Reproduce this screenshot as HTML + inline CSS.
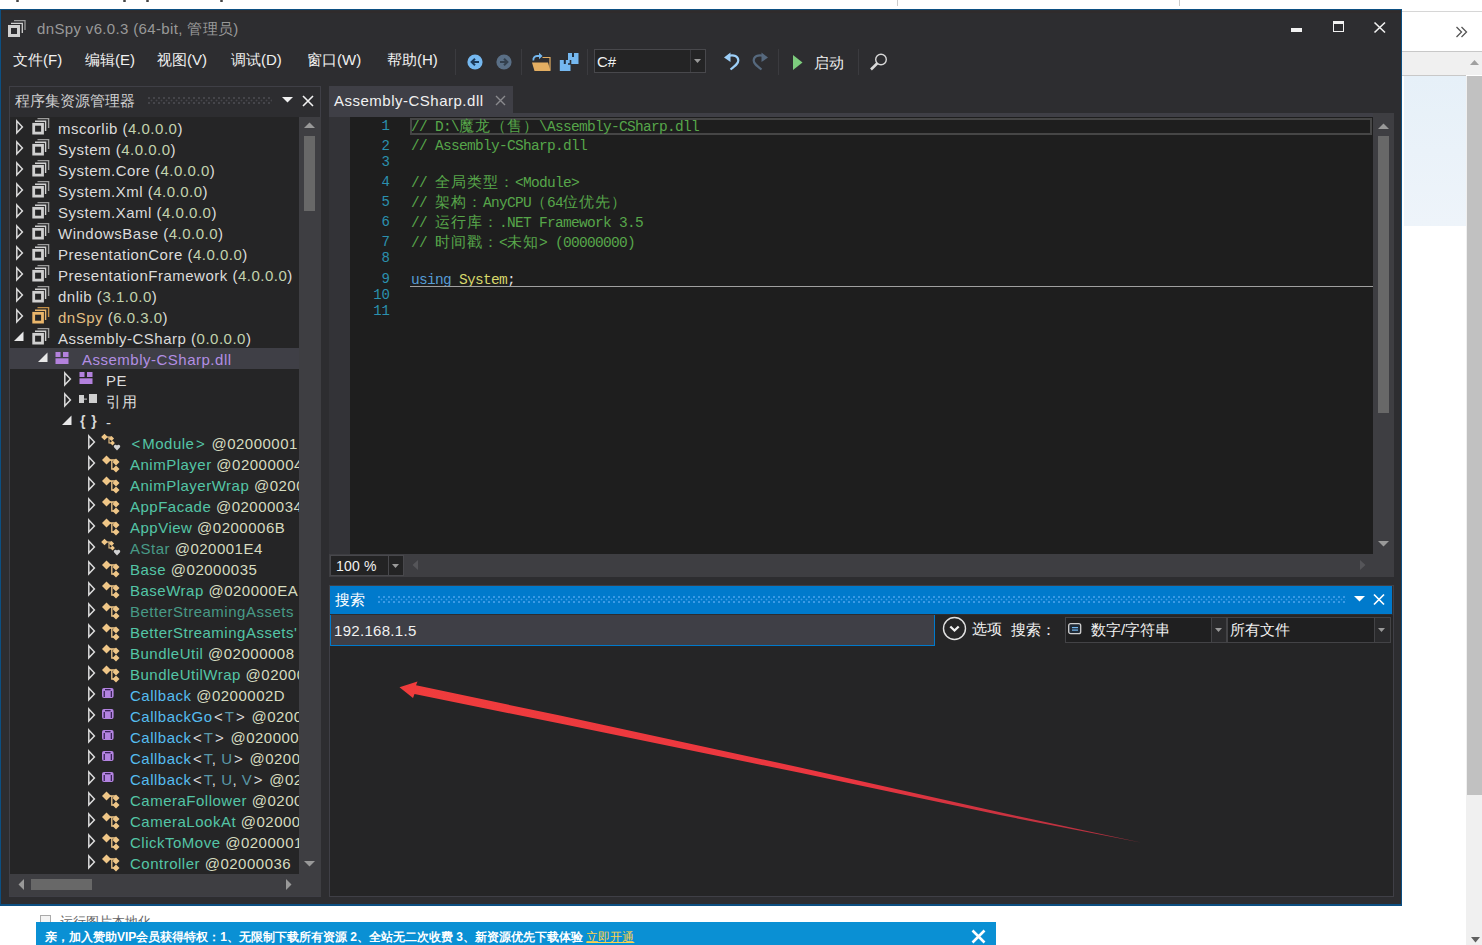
<!DOCTYPE html><html><head><meta charset="utf-8"><style>
*{box-sizing:border-box}
html,body{margin:0;padding:0}
body{width:1482px;height:945px;position:relative;overflow:hidden;background:#fff;font-family:"Liberation Sans",sans-serif}
.a{position:absolute}
.t{position:absolute;white-space:nowrap;line-height:1}
svg{position:absolute;overflow:visible}
</style></head><body>
<div class="a" style="left:1402px;top:11px;width:80px;height:1px;background:#d6d6d6"></div>
<div class="a" style="left:1402px;top:51px;width:80px;height:1px;background:#c8c8c8"></div>
<div class="a" style="left:1402px;top:52px;width:80px;height:23px;background:#f0f0f0"></div>
<div class="a" style="left:1402px;top:75px;width:64px;height:1px;background:#c8c8c8"></div>
<div class="a" style="left:1404px;top:76px;width:62px;height:150px;background:linear-gradient(#e6f0f8,#eef4fa)"></div>
<div class="a" style="left:1466px;top:76px;width:16px;height:869px;background:#f0f0f0"></div>
<div class="a" style="left:1467px;top:76px;width:15px;height:719px;background:#c1c1c1"></div>
<svg style="left:1470px;top:59px" width="10" height="7"><path d="M0 6 L4.5 1 L9 6Z" fill="#a0a0a0"/></svg>
<svg style="left:1471px;top:937px" width="10" height="7"><path d="M0 0 L4.5 5.5 L9 0Z" fill="#606060"/></svg>
<svg style="left:1455px;top:26px" width="14" height="12"><path d="M1.5 1 L6.5 6 L1.5 11 M6.5 1 L11.5 6 L6.5 11" fill="none" stroke="#555" stroke-width="1.3"/></svg>
<div class="a" style="left:16px;top:0;width:3px;height:2px;background:#444;border-radius:1px"></div>
<div class="a" style="left:123px;top:0;width:3px;height:2px;background:#444;border-radius:1px"></div>
<div class="a" style="left:146px;top:0;width:3px;height:2px;background:#444;border-radius:1px"></div>
<div class="a" style="left:220px;top:0;width:3px;height:2px;background:#444;border-radius:1px"></div>
<div class="a" style="left:897px;top:0;width:1px;height:6px;background:#ccc"></div>
<div class="a" style="left:1179px;top:0;width:1px;height:6px;background:#ccc"></div>
<div class="a" style="left:0;top:9px;width:1402px;height:897px;background:#2d2d30;border:1px solid #0c4f82;border-bottom-width:2px"></div>
<div class="a" style="left:1px;top:11px;width:1400px;height:2px;background:#2f2b2c"></div>
<svg style="left:8px;top:19px" width="19" height="19" viewBox="0 0 19 19">
<path d="M6 1.6 H17 V11" fill="none" stroke="#9a9a9a" stroke-width="1.3"/>
<path d="M3 4.3 H14.3 V14" fill="none" stroke="#d0d0d0" stroke-width="1.3"/>
<rect x="1.5" y="7.5" width="9" height="9" fill="none" stroke="#d0d0d0" stroke-width="3"/>
</svg>
<div class="t" style="left:37px;top:21px;font-size:15px;color:#999;letter-spacing:0.35px">dnSpy v6.0.3 (64-bit, 管理员)</div>
<div class="a" style="left:1291px;top:28px;width:11px;height:4px;background:#f1f1f1"></div>
<div class="a" style="left:1333px;top:21px;width:11px;height:11px;border:1px solid #f1f1f1;border-top-width:3px"></div>
<svg style="left:1374px;top:22px" width="12" height="11"><path d="M0.5 0.5 L11 10.5 M11 0.5 L0.5 10.5" stroke="#f1f1f1" stroke-width="1.6"/></svg>
<div class="t" style="left:13px;top:52px;font-size:15px;color:#f1f1f1">文件(F)</div>
<div class="t" style="left:85px;top:52px;font-size:15px;color:#f1f1f1">编辑(E)</div>
<div class="t" style="left:157px;top:52px;font-size:15px;color:#f1f1f1">视图(V)</div>
<div class="t" style="left:231px;top:52px;font-size:15px;color:#f1f1f1">调试(D)</div>
<div class="t" style="left:307px;top:52px;font-size:15px;color:#f1f1f1">窗口(W)</div>
<div class="t" style="left:387px;top:52px;font-size:15px;color:#f1f1f1">帮助(H)</div>
<div class="a" style="left:455px;top:49px;width:1px;height:26px;background:#3b3b3f"></div>
<div class="a" style="left:521px;top:49px;width:1px;height:26px;background:#3b3b3f"></div>
<div class="a" style="left:587px;top:49px;width:1px;height:26px;background:#3b3b3f"></div>
<div class="a" style="left:778px;top:49px;width:1px;height:26px;background:#3b3b3f"></div>
<div class="a" style="left:858px;top:49px;width:1px;height:26px;background:#3b3b3f"></div>
<svg style="left:466px;top:53px" width="18" height="18" viewBox="0 0 18 18">
<circle cx="9" cy="9" r="7.6" fill="#75b8f0"/>
<path d="M13 9 H6 M9 5.7 L5.6 9 L9 12.3" fill="none" stroke="#1b3a5a" stroke-width="2"/></svg>
<svg style="left:495px;top:53px" width="18" height="18" viewBox="0 0 18 18">
<circle cx="9" cy="9" r="7.6" fill="#5a6f86"/>
<path d="M5 9 H12 M9 5.7 L12.4 9 L9 12.3" fill="none" stroke="#33404e" stroke-width="2"/></svg>
<svg style="left:531px;top:52px" width="21" height="21" viewBox="0 0 21 21">
<path d="M11.5 5.5 H19 V18.5" fill="none" stroke="#e3ae62" stroke-width="1.2"/>
<path d="M1 10.5 H17 L19.5 19 H3.5Z" fill="#e3ae62"/>
<path d="M2.5 8.5 A3.6 3.6 0 0 1 6 4 H8.5" fill="none" stroke="#75b8f0" stroke-width="1.8"/>
<path d="M8 0.8 L11.5 4 L8 7.2Z" fill="#75b8f0"/>
</svg>
<svg style="left:559px;top:52px" width="21" height="21" viewBox="0 0 21 21">
<path d="M9 1 H19.5 V12 H9Z" fill="#75b8f0"/><rect x="13" y="1" width="2" height="4" fill="#1e2f40"/>
<path d="M0.8 8 H11.5 V19 H0.8Z" fill="#75b8f0" stroke="#2d2d30" stroke-width="0"/>
<path d="M11.5 8 V12 H9" fill="none" stroke="#2d2d30" stroke-width="1.6"/>
<rect x="4.8" y="8" width="2" height="4" fill="#1e2f40"/>
</svg>
<div class="a" style="left:594px;top:49px;width:112px;height:24px;background:#242425;border:1px solid #48484c"></div>
<div class="a" style="left:690px;top:50px;width:1px;height:22px;background:#3a3a3e"></div>
<svg style="left:694px;top:59px" width="8" height="5"><path d="M0 0 H7 L3.5 4Z" fill="#999"/></svg>
<div class="t" style="left:597px;top:54px;font-size:15px;color:#f1f1f1">C#</div>
<svg style="left:720px;top:50px" width="22" height="22" viewBox="0 0 22 22">
<path d="M8.5 5.8 C14 4.3, 18.3 6.3, 18.3 10.5 C18.3 13.2, 16 15.2, 10.5 19.5" fill="none" stroke="#9dcff8" stroke-width="2.2"/>
<path d="M4 7.5 L10.5 2.5 L10.5 12Z" fill="#9dcff8"/></svg>
<svg style="left:750px;top:50px" width="22" height="22" viewBox="0 0 22 22">
<path d="M13.5 5.8 C8 4.3, 3.7 6.3, 3.7 10.5 C3.7 13.2, 6 15.2, 11.5 19.5" fill="none" stroke="#56697e" stroke-width="2.2"/>
<path d="M18 7.5 L11.5 2.5 L11.5 12Z" fill="#56697e"/></svg>
<svg style="left:792px;top:54px" width="12" height="16"><path d="M1 1 L10.5 8.5 L1 16Z" fill="#7dcc7d"/></svg>
<div class="t" style="left:814px;top:55px;font-size:15px;color:#f1f1f1">启动</div>
<svg style="left:869px;top:52px" width="20" height="20" viewBox="0 0 20 20">
<circle cx="12" cy="7.5" r="5.3" fill="none" stroke="#d8d8d8" stroke-width="1.4"/>
<path d="M8.3 11.3 L2 17.5" stroke="#d8d8d8" stroke-width="2.6"/></svg>
<div class="a" style="left:9px;top:86px;width:312px;height:811px;background:#2d2d30;border:1px solid #3f3f46"></div>
<div class="t" style="left:15px;top:93px;font-size:15px;color:#d0d0d0">程序集资源管理器</div>
<div class="a" style="left:148px;top:97px;width:124px;height:7px;background-image:radial-gradient(circle at 1px 1px,#45454a 0.8px,transparent 1.1px),radial-gradient(circle at 3.5px 3.5px,#45454a 0.8px,transparent 1.1px);background-size:5px 5px"></div>
<svg style="left:282px;top:97px" width="11" height="6"><path d="M0 0 H11 L5.5 5.5Z" fill="#f1f1f1"/></svg>
<svg style="left:302px;top:95px" width="12" height="12"><path d="M1 1 L11 11 M11 1 L1 11" stroke="#f1f1f1" stroke-width="1.6"/></svg>
<div class="a" style="left:10px;top:117px;width:289px;height:757px;background:#252526;overflow:hidden" id="tree">
<svg style="left:5.4px;top:0px" width="10" height="20" viewBox="0 0 10 20"><path d="M1.8 4 L7.4 9.9 L1.8 15.8Z" fill="none" stroke="#dadada" stroke-width="1.5" stroke-linejoin="miter"/></svg>
<svg style="left:21px;top:0px" width="19" height="19" viewBox="0 0 19 19"><path d="M6.5 1.6 H17.6 V11" fill="none" stroke="#9c9c9c" stroke-width="1.4"/><path d="M4 4.3 H14.6 V14" fill="none" stroke="#d0d0d0" stroke-width="1.4"/><rect x="2.7" y="7.3" width="8.8" height="8.8" fill="none" stroke="#d0d0d0" stroke-width="2.8"/></svg>
<div class="t" style="left:48px;top:4px;font-size:15px;letter-spacing:0.5px"><span style="color:#dcdcdc">mscorlib</span><span style="color:#dcdcdc"> (</span><span style="color:#c2d3ad">4.0.0.0</span><span style="color:#dcdcdc">)</span></div>
<svg style="left:5.4px;top:21px" width="10" height="20" viewBox="0 0 10 20"><path d="M1.8 4 L7.4 9.9 L1.8 15.8Z" fill="none" stroke="#dadada" stroke-width="1.5" stroke-linejoin="miter"/></svg>
<svg style="left:21px;top:21px" width="19" height="19" viewBox="0 0 19 19"><path d="M6.5 1.6 H17.6 V11" fill="none" stroke="#9c9c9c" stroke-width="1.4"/><path d="M4 4.3 H14.6 V14" fill="none" stroke="#d0d0d0" stroke-width="1.4"/><rect x="2.7" y="7.3" width="8.8" height="8.8" fill="none" stroke="#d0d0d0" stroke-width="2.8"/></svg>
<div class="t" style="left:48px;top:25px;font-size:15px;letter-spacing:0.5px"><span style="color:#dcdcdc">System</span><span style="color:#dcdcdc"> (</span><span style="color:#c2d3ad">4.0.0.0</span><span style="color:#dcdcdc">)</span></div>
<svg style="left:5.4px;top:42px" width="10" height="20" viewBox="0 0 10 20"><path d="M1.8 4 L7.4 9.9 L1.8 15.8Z" fill="none" stroke="#dadada" stroke-width="1.5" stroke-linejoin="miter"/></svg>
<svg style="left:21px;top:42px" width="19" height="19" viewBox="0 0 19 19"><path d="M6.5 1.6 H17.6 V11" fill="none" stroke="#9c9c9c" stroke-width="1.4"/><path d="M4 4.3 H14.6 V14" fill="none" stroke="#d0d0d0" stroke-width="1.4"/><rect x="2.7" y="7.3" width="8.8" height="8.8" fill="none" stroke="#d0d0d0" stroke-width="2.8"/></svg>
<div class="t" style="left:48px;top:46px;font-size:15px;letter-spacing:0.5px"><span style="color:#dcdcdc">System.Core</span><span style="color:#dcdcdc"> (</span><span style="color:#c2d3ad">4.0.0.0</span><span style="color:#dcdcdc">)</span></div>
<svg style="left:5.4px;top:63px" width="10" height="20" viewBox="0 0 10 20"><path d="M1.8 4 L7.4 9.9 L1.8 15.8Z" fill="none" stroke="#dadada" stroke-width="1.5" stroke-linejoin="miter"/></svg>
<svg style="left:21px;top:63px" width="19" height="19" viewBox="0 0 19 19"><path d="M6.5 1.6 H17.6 V11" fill="none" stroke="#9c9c9c" stroke-width="1.4"/><path d="M4 4.3 H14.6 V14" fill="none" stroke="#d0d0d0" stroke-width="1.4"/><rect x="2.7" y="7.3" width="8.8" height="8.8" fill="none" stroke="#d0d0d0" stroke-width="2.8"/></svg>
<div class="t" style="left:48px;top:67px;font-size:15px;letter-spacing:0.5px"><span style="color:#dcdcdc">System.Xml</span><span style="color:#dcdcdc"> (</span><span style="color:#c2d3ad">4.0.0.0</span><span style="color:#dcdcdc">)</span></div>
<svg style="left:5.4px;top:84px" width="10" height="20" viewBox="0 0 10 20"><path d="M1.8 4 L7.4 9.9 L1.8 15.8Z" fill="none" stroke="#dadada" stroke-width="1.5" stroke-linejoin="miter"/></svg>
<svg style="left:21px;top:84px" width="19" height="19" viewBox="0 0 19 19"><path d="M6.5 1.6 H17.6 V11" fill="none" stroke="#9c9c9c" stroke-width="1.4"/><path d="M4 4.3 H14.6 V14" fill="none" stroke="#d0d0d0" stroke-width="1.4"/><rect x="2.7" y="7.3" width="8.8" height="8.8" fill="none" stroke="#d0d0d0" stroke-width="2.8"/></svg>
<div class="t" style="left:48px;top:88px;font-size:15px;letter-spacing:0.5px"><span style="color:#dcdcdc">System.Xaml</span><span style="color:#dcdcdc"> (</span><span style="color:#c2d3ad">4.0.0.0</span><span style="color:#dcdcdc">)</span></div>
<svg style="left:5.4px;top:105px" width="10" height="20" viewBox="0 0 10 20"><path d="M1.8 4 L7.4 9.9 L1.8 15.8Z" fill="none" stroke="#dadada" stroke-width="1.5" stroke-linejoin="miter"/></svg>
<svg style="left:21px;top:105px" width="19" height="19" viewBox="0 0 19 19"><path d="M6.5 1.6 H17.6 V11" fill="none" stroke="#9c9c9c" stroke-width="1.4"/><path d="M4 4.3 H14.6 V14" fill="none" stroke="#d0d0d0" stroke-width="1.4"/><rect x="2.7" y="7.3" width="8.8" height="8.8" fill="none" stroke="#d0d0d0" stroke-width="2.8"/></svg>
<div class="t" style="left:48px;top:109px;font-size:15px;letter-spacing:0.5px"><span style="color:#dcdcdc">WindowsBase</span><span style="color:#dcdcdc"> (</span><span style="color:#c2d3ad">4.0.0.0</span><span style="color:#dcdcdc">)</span></div>
<svg style="left:5.4px;top:126px" width="10" height="20" viewBox="0 0 10 20"><path d="M1.8 4 L7.4 9.9 L1.8 15.8Z" fill="none" stroke="#dadada" stroke-width="1.5" stroke-linejoin="miter"/></svg>
<svg style="left:21px;top:126px" width="19" height="19" viewBox="0 0 19 19"><path d="M6.5 1.6 H17.6 V11" fill="none" stroke="#9c9c9c" stroke-width="1.4"/><path d="M4 4.3 H14.6 V14" fill="none" stroke="#d0d0d0" stroke-width="1.4"/><rect x="2.7" y="7.3" width="8.8" height="8.8" fill="none" stroke="#d0d0d0" stroke-width="2.8"/></svg>
<div class="t" style="left:48px;top:130px;font-size:15px;letter-spacing:0.5px"><span style="color:#dcdcdc">PresentationCore</span><span style="color:#dcdcdc"> (</span><span style="color:#c2d3ad">4.0.0.0</span><span style="color:#dcdcdc">)</span></div>
<svg style="left:5.4px;top:147px" width="10" height="20" viewBox="0 0 10 20"><path d="M1.8 4 L7.4 9.9 L1.8 15.8Z" fill="none" stroke="#dadada" stroke-width="1.5" stroke-linejoin="miter"/></svg>
<svg style="left:21px;top:147px" width="19" height="19" viewBox="0 0 19 19"><path d="M6.5 1.6 H17.6 V11" fill="none" stroke="#9c9c9c" stroke-width="1.4"/><path d="M4 4.3 H14.6 V14" fill="none" stroke="#d0d0d0" stroke-width="1.4"/><rect x="2.7" y="7.3" width="8.8" height="8.8" fill="none" stroke="#d0d0d0" stroke-width="2.8"/></svg>
<div class="t" style="left:48px;top:151px;font-size:15px;letter-spacing:0.5px"><span style="color:#dcdcdc">PresentationFramework</span><span style="color:#dcdcdc"> (</span><span style="color:#c2d3ad">4.0.0.0</span><span style="color:#dcdcdc">)</span></div>
<svg style="left:5.4px;top:168px" width="10" height="20" viewBox="0 0 10 20"><path d="M1.8 4 L7.4 9.9 L1.8 15.8Z" fill="none" stroke="#dadada" stroke-width="1.5" stroke-linejoin="miter"/></svg>
<svg style="left:21px;top:168px" width="19" height="19" viewBox="0 0 19 19"><path d="M6.5 1.6 H17.6 V11" fill="none" stroke="#9c9c9c" stroke-width="1.4"/><path d="M4 4.3 H14.6 V14" fill="none" stroke="#d0d0d0" stroke-width="1.4"/><rect x="2.7" y="7.3" width="8.8" height="8.8" fill="none" stroke="#d0d0d0" stroke-width="2.8"/></svg>
<div class="t" style="left:48px;top:172px;font-size:15px;letter-spacing:0.5px"><span style="color:#dcdcdc">dnlib</span><span style="color:#dcdcdc"> (</span><span style="color:#c2d3ad">3.1.0.0</span><span style="color:#dcdcdc">)</span></div>
<svg style="left:5.4px;top:189px" width="10" height="20" viewBox="0 0 10 20"><path d="M1.8 4 L7.4 9.9 L1.8 15.8Z" fill="none" stroke="#dadada" stroke-width="1.5" stroke-linejoin="miter"/></svg>
<svg style="left:21px;top:189px" width="19" height="19" viewBox="0 0 19 19"><path d="M6.5 1.6 H17.6 V11" fill="none" stroke="#c49048" stroke-width="1.4"/><path d="M4 4.3 H14.6 V14" fill="none" stroke="#eab66b" stroke-width="1.4"/><rect x="2.7" y="7.3" width="8.8" height="8.8" fill="none" stroke="#eab66b" stroke-width="2.8"/></svg>
<div class="t" style="left:48px;top:193px;font-size:15px;letter-spacing:0.5px"><span style="color:#e2bf83">dnSpy</span><span style="color:#dcdcdc"> (</span><span style="color:#c2d3ad">6.0.3.0</span><span style="color:#dcdcdc">)</span></div>
<svg style="left:3px;top:210px" width="11" height="20" viewBox="0 0 11 20"><path d="M1.0 14 H10.5 V4.5Z" fill="#e8e8e8"/></svg>
<svg style="left:21px;top:210px" width="19" height="19" viewBox="0 0 19 19"><path d="M6.5 1.6 H17.6 V11" fill="none" stroke="#9c9c9c" stroke-width="1.4"/><path d="M4 4.3 H14.6 V14" fill="none" stroke="#d0d0d0" stroke-width="1.4"/><rect x="2.7" y="7.3" width="8.8" height="8.8" fill="none" stroke="#d0d0d0" stroke-width="2.8"/></svg>
<div class="t" style="left:48px;top:214px;font-size:15px;letter-spacing:0.5px"><span style="color:#dcdcdc">Assembly-CSharp</span><span style="color:#dcdcdc"> (</span><span style="color:#c2d3ad">0.0.0.0</span><span style="color:#dcdcdc">)</span></div>
<div class="a" style="left:0;top:231px;width:289px;height:21px;background:#3f3f46"></div>
<svg style="left:27px;top:231px" width="11" height="20" viewBox="0 0 11 20"><path d="M1.0 14 H10.5 V4.5Z" fill="#e8e8e8"/></svg>
<svg style="left:45px;top:235px" width="15" height="13" viewBox="0 0 15 13"><rect x="0.5" y="0" width="5" height="5" fill="#b381dd"/><rect x="8" y="0" width="5.5" height="5" fill="#b381dd"/><rect x="0.5" y="6.3" width="13" height="5.7" fill="#b381dd"/></svg>
<div class="t" style="left:72px;top:235px;font-size:15px;letter-spacing:0.5px"><span style="color:#b28ee3">Assembly-CSharp.dll</span></div>
<svg style="left:53.4px;top:252px" width="10" height="20" viewBox="0 0 10 20"><path d="M1.8 4 L7.4 9.9 L1.8 15.8Z" fill="none" stroke="#dadada" stroke-width="1.5" stroke-linejoin="miter"/></svg>
<svg style="left:69px;top:255px" width="15" height="13" viewBox="0 0 15 13"><rect x="0.5" y="0" width="5" height="5" fill="#b381dd"/><rect x="8" y="0" width="5.5" height="5" fill="#b381dd"/><rect x="0.5" y="6.3" width="13" height="5.7" fill="#b381dd"/></svg>
<div class="t" style="left:96px;top:256px;font-size:15px;letter-spacing:0.5px"><span style="color:#dcdcdc">PE</span></div>
<svg style="left:53.4px;top:273px" width="10" height="20" viewBox="0 0 10 20"><path d="M1.8 4 L7.4 9.9 L1.8 15.8Z" fill="none" stroke="#dadada" stroke-width="1.5" stroke-linejoin="miter"/></svg>
<svg style="left:69px;top:273px" width="20" height="20" viewBox="0 0 20 20"><rect x="0" y="5" width="5" height="8" fill="#cfcfcf"/><rect x="5" y="8.6" width="3" height="1" fill="#cfcfcf"/><rect x="10" y="4" width="8" height="9" fill="#cfcfcf"/></svg>
<div class="t" style="left:96px;top:277px;font-size:15px;letter-spacing:0.5px"><span style="color:#dcdcdc">引用</span></div>
<svg style="left:51px;top:294px" width="11" height="20" viewBox="0 0 11 20"><path d="M1.0 14 H10.5 V4.5Z" fill="#e8e8e8"/></svg>
<div class="t" style="left:70px;top:297px;font-size:14px;font-weight:bold;color:#d8d8d8;letter-spacing:1px">{ }</div>
<div class="t" style="left:96px;top:298px;font-size:15px;letter-spacing:0.5px"><span style="color:#dcdcdc">-</span></div>
<svg style="left:77.4px;top:315px" width="10" height="20" viewBox="0 0 10 20"><path d="M1.8 4 L7.4 9.9 L1.8 15.8Z" fill="none" stroke="#dadada" stroke-width="1.5" stroke-linejoin="miter"/></svg>
<svg style="left:91px;top:315px" width="21" height="21" viewBox="0 0 21 21"><path d="M3.5 5 H10.5 M8 5 V11 H11.5" fill="none" stroke="#efc687" stroke-width="1.1"/><path d="M0.2 5 L3.5 1.7 L6.8 5 L3.5 8.3Z" fill="#efc687"/><path d="M7.9 6.5 L10.5 3.9 L13.1 6.5 L10.5 9.1Z" fill="#efc687"/><path d="M9.1 11 L11.5 8.6 L13.9 11 L11.5 13.4Z" fill="#efc687"/><path d="M16 18.6 L13 15.3 A1.6 1.6 0 0 1 16 13.6 A1.6 1.6 0 0 1 19 15.3Z" fill="#d2d2d2"/></svg>
<div class="t" style="left:120px;top:319px;font-size:15px;letter-spacing:0.5px"><span style="color:#54c5a6;padding:0 1.5px">&lt;</span><span style="color:#54c5a6">Module</span><span style="color:#54c5a6;padding:0 1.5px">&gt;</span><span style="color:#d6dcc0"> @02000001</span></div>
<svg style="left:77.4px;top:336px" width="10" height="20" viewBox="0 0 10 20"><path d="M1.8 4 L7.4 9.9 L1.8 15.8Z" fill="none" stroke="#dadada" stroke-width="1.5" stroke-linejoin="miter"/></svg>
<svg style="left:91px;top:336px" width="20" height="20" viewBox="0 0 20 20"><path d="M5.5 7 H15 M10.8 7 V16 H15" fill="none" stroke="#efc687" stroke-width="1.3"/><path d="M1 7 L5.5 2.5 L10 7 L5.5 11.5Z" fill="#efc687"/><path d="M11.5 9 L15 5.5 L18.5 9 L15 12.5Z" fill="#efc687"/><path d="M11.5 16 L15 12.5 L18.5 16 L15 19.5Z" fill="#efc687"/></svg>
<div class="t" style="left:120px;top:340px;font-size:15px;letter-spacing:0.5px"><span style="color:#54c5a6">AnimPlayer</span><span style="color:#d6dcc0"> @02000004</span></div>
<svg style="left:77.4px;top:357px" width="10" height="20" viewBox="0 0 10 20"><path d="M1.8 4 L7.4 9.9 L1.8 15.8Z" fill="none" stroke="#dadada" stroke-width="1.5" stroke-linejoin="miter"/></svg>
<svg style="left:91px;top:357px" width="20" height="20" viewBox="0 0 20 20"><path d="M5.5 7 H15 M10.8 7 V16 H15" fill="none" stroke="#efc687" stroke-width="1.3"/><path d="M1 7 L5.5 2.5 L10 7 L5.5 11.5Z" fill="#efc687"/><path d="M11.5 9 L15 5.5 L18.5 9 L15 12.5Z" fill="#efc687"/><path d="M11.5 16 L15 12.5 L18.5 16 L15 19.5Z" fill="#efc687"/></svg>
<div class="t" style="left:120px;top:361px;font-size:15px;letter-spacing:0.5px"><span style="color:#54c5a6">AnimPlayerWrap</span><span style="color:#d6dcc0"> @02000005</span></div>
<svg style="left:77.4px;top:378px" width="10" height="20" viewBox="0 0 10 20"><path d="M1.8 4 L7.4 9.9 L1.8 15.8Z" fill="none" stroke="#dadada" stroke-width="1.5" stroke-linejoin="miter"/></svg>
<svg style="left:91px;top:378px" width="20" height="20" viewBox="0 0 20 20"><path d="M5.5 7 H15 M10.8 7 V16 H15" fill="none" stroke="#efc687" stroke-width="1.3"/><path d="M1 7 L5.5 2.5 L10 7 L5.5 11.5Z" fill="#efc687"/><path d="M11.5 9 L15 5.5 L18.5 9 L15 12.5Z" fill="#efc687"/><path d="M11.5 16 L15 12.5 L18.5 16 L15 19.5Z" fill="#efc687"/></svg>
<div class="t" style="left:120px;top:382px;font-size:15px;letter-spacing:0.5px"><span style="color:#54c5a6">AppFacade</span><span style="color:#d6dcc0"> @02000034</span></div>
<svg style="left:77.4px;top:399px" width="10" height="20" viewBox="0 0 10 20"><path d="M1.8 4 L7.4 9.9 L1.8 15.8Z" fill="none" stroke="#dadada" stroke-width="1.5" stroke-linejoin="miter"/></svg>
<svg style="left:91px;top:399px" width="20" height="20" viewBox="0 0 20 20"><path d="M5.5 7 H15 M10.8 7 V16 H15" fill="none" stroke="#efc687" stroke-width="1.3"/><path d="M1 7 L5.5 2.5 L10 7 L5.5 11.5Z" fill="#efc687"/><path d="M11.5 9 L15 5.5 L18.5 9 L15 12.5Z" fill="#efc687"/><path d="M11.5 16 L15 12.5 L18.5 16 L15 19.5Z" fill="#efc687"/></svg>
<div class="t" style="left:120px;top:403px;font-size:15px;letter-spacing:0.5px"><span style="color:#54c5a6">AppView</span><span style="color:#d6dcc0"> @0200006B</span></div>
<svg style="left:77.4px;top:420px" width="10" height="20" viewBox="0 0 10 20"><path d="M1.8 4 L7.4 9.9 L1.8 15.8Z" fill="none" stroke="#dadada" stroke-width="1.5" stroke-linejoin="miter"/></svg>
<svg style="left:91px;top:420px" width="21" height="21" viewBox="0 0 21 21"><path d="M3.5 5 H10.5 M8 5 V11 H11.5" fill="none" stroke="#efc687" stroke-width="1.1"/><path d="M0.2 5 L3.5 1.7 L6.8 5 L3.5 8.3Z" fill="#efc687"/><path d="M7.9 6.5 L10.5 3.9 L13.1 6.5 L10.5 9.1Z" fill="#efc687"/><path d="M9.1 11 L11.5 8.6 L13.9 11 L11.5 13.4Z" fill="#efc687"/><path d="M16 18.6 L13 15.3 A1.6 1.6 0 0 1 16 13.6 A1.6 1.6 0 0 1 19 15.3Z" fill="#d2d2d2"/></svg>
<div class="t" style="left:120px;top:424px;font-size:15px;letter-spacing:0.5px"><span style="color:#489a86">AStar</span><span style="color:#d6dcc0"> @020001E4</span></div>
<svg style="left:77.4px;top:441px" width="10" height="20" viewBox="0 0 10 20"><path d="M1.8 4 L7.4 9.9 L1.8 15.8Z" fill="none" stroke="#dadada" stroke-width="1.5" stroke-linejoin="miter"/></svg>
<svg style="left:91px;top:441px" width="20" height="20" viewBox="0 0 20 20"><path d="M5.5 7 H15 M10.8 7 V16 H15" fill="none" stroke="#efc687" stroke-width="1.3"/><path d="M1 7 L5.5 2.5 L10 7 L5.5 11.5Z" fill="#efc687"/><path d="M11.5 9 L15 5.5 L18.5 9 L15 12.5Z" fill="#efc687"/><path d="M11.5 16 L15 12.5 L18.5 16 L15 19.5Z" fill="#efc687"/></svg>
<div class="t" style="left:120px;top:445px;font-size:15px;letter-spacing:0.5px"><span style="color:#54c5a6">Base</span><span style="color:#d6dcc0"> @02000035</span></div>
<svg style="left:77.4px;top:462px" width="10" height="20" viewBox="0 0 10 20"><path d="M1.8 4 L7.4 9.9 L1.8 15.8Z" fill="none" stroke="#dadada" stroke-width="1.5" stroke-linejoin="miter"/></svg>
<svg style="left:91px;top:462px" width="20" height="20" viewBox="0 0 20 20"><path d="M5.5 7 H15 M10.8 7 V16 H15" fill="none" stroke="#efc687" stroke-width="1.3"/><path d="M1 7 L5.5 2.5 L10 7 L5.5 11.5Z" fill="#efc687"/><path d="M11.5 9 L15 5.5 L18.5 9 L15 12.5Z" fill="#efc687"/><path d="M11.5 16 L15 12.5 L18.5 16 L15 19.5Z" fill="#efc687"/></svg>
<div class="t" style="left:120px;top:466px;font-size:15px;letter-spacing:0.5px"><span style="color:#54c5a6">BaseWrap</span><span style="color:#d6dcc0"> @020000EA</span></div>
<svg style="left:77.4px;top:483px" width="10" height="20" viewBox="0 0 10 20"><path d="M1.8 4 L7.4 9.9 L1.8 15.8Z" fill="none" stroke="#dadada" stroke-width="1.5" stroke-linejoin="miter"/></svg>
<svg style="left:91px;top:483px" width="20" height="20" viewBox="0 0 20 20"><path d="M5.5 7 H15 M10.8 7 V16 H15" fill="none" stroke="#efc687" stroke-width="1.3"/><path d="M1 7 L5.5 2.5 L10 7 L5.5 11.5Z" fill="#efc687"/><path d="M11.5 9 L15 5.5 L18.5 9 L15 12.5Z" fill="#efc687"/><path d="M11.5 16 L15 12.5 L18.5 16 L15 19.5Z" fill="#efc687"/></svg>
<div class="t" style="left:120px;top:487px;font-size:15px;letter-spacing:0.5px"><span style="color:#489a86">BetterStreamingAssets</span><span style="color:#d6dcc0"> @02000002</span></div>
<svg style="left:77.4px;top:504px" width="10" height="20" viewBox="0 0 10 20"><path d="M1.8 4 L7.4 9.9 L1.8 15.8Z" fill="none" stroke="#dadada" stroke-width="1.5" stroke-linejoin="miter"/></svg>
<svg style="left:91px;top:504px" width="20" height="20" viewBox="0 0 20 20"><path d="M5.5 7 H15 M10.8 7 V16 H15" fill="none" stroke="#efc687" stroke-width="1.3"/><path d="M1 7 L5.5 2.5 L10 7 L5.5 11.5Z" fill="#efc687"/><path d="M11.5 9 L15 5.5 L18.5 9 L15 12.5Z" fill="#efc687"/><path d="M11.5 16 L15 12.5 L18.5 16 L15 19.5Z" fill="#efc687"/></svg>
<div class="t" style="left:120px;top:508px;font-size:15px;letter-spacing:0.5px"><span style="color:#54c5a6">BetterStreamingAssets&#x27;</span><span style="color:#d6dcc0"> @02000003</span></div>
<svg style="left:77.4px;top:525px" width="10" height="20" viewBox="0 0 10 20"><path d="M1.8 4 L7.4 9.9 L1.8 15.8Z" fill="none" stroke="#dadada" stroke-width="1.5" stroke-linejoin="miter"/></svg>
<svg style="left:91px;top:525px" width="20" height="20" viewBox="0 0 20 20"><path d="M5.5 7 H15 M10.8 7 V16 H15" fill="none" stroke="#efc687" stroke-width="1.3"/><path d="M1 7 L5.5 2.5 L10 7 L5.5 11.5Z" fill="#efc687"/><path d="M11.5 9 L15 5.5 L18.5 9 L15 12.5Z" fill="#efc687"/><path d="M11.5 16 L15 12.5 L18.5 16 L15 19.5Z" fill="#efc687"/></svg>
<div class="t" style="left:120px;top:529px;font-size:15px;letter-spacing:0.5px"><span style="color:#54c5a6">BundleUtil</span><span style="color:#d6dcc0"> @02000008</span></div>
<svg style="left:77.4px;top:546px" width="10" height="20" viewBox="0 0 10 20"><path d="M1.8 4 L7.4 9.9 L1.8 15.8Z" fill="none" stroke="#dadada" stroke-width="1.5" stroke-linejoin="miter"/></svg>
<svg style="left:91px;top:546px" width="20" height="20" viewBox="0 0 20 20"><path d="M5.5 7 H15 M10.8 7 V16 H15" fill="none" stroke="#efc687" stroke-width="1.3"/><path d="M1 7 L5.5 2.5 L10 7 L5.5 11.5Z" fill="#efc687"/><path d="M11.5 9 L15 5.5 L18.5 9 L15 12.5Z" fill="#efc687"/><path d="M11.5 16 L15 12.5 L18.5 16 L15 19.5Z" fill="#efc687"/></svg>
<div class="t" style="left:120px;top:550px;font-size:15px;letter-spacing:0.5px"><span style="color:#54c5a6">BundleUtilWrap</span><span style="color:#d6dcc0"> @02000009</span></div>
<svg style="left:77.4px;top:567px" width="10" height="20" viewBox="0 0 10 20"><path d="M1.8 4 L7.4 9.9 L1.8 15.8Z" fill="none" stroke="#dadada" stroke-width="1.5" stroke-linejoin="miter"/></svg>
<svg style="left:91px;top:567px" width="14" height="16" viewBox="0 0 14 16"><rect x="1" y="4" width="11.6" height="10" rx="2" fill="#b383e0"/><rect x="4" y="5" width="5.6" height="1.3" fill="#3a2259"/><rect x="2.6" y="7" width="1.3" height="6" fill="#3a2259"/><rect x="9.7" y="7" width="1.3" height="6" fill="#3a2259"/></svg>
<div class="t" style="left:120px;top:571px;font-size:15px;letter-spacing:0.5px"><span style="color:#55bdf0">Callback</span><span style="color:#d6dcc0"> @0200002D</span></div>
<svg style="left:77.4px;top:588px" width="10" height="20" viewBox="0 0 10 20"><path d="M1.8 4 L7.4 9.9 L1.8 15.8Z" fill="none" stroke="#dadada" stroke-width="1.5" stroke-linejoin="miter"/></svg>
<svg style="left:91px;top:588px" width="14" height="16" viewBox="0 0 14 16"><rect x="1" y="4" width="11.6" height="10" rx="2" fill="#b383e0"/><rect x="4" y="5" width="5.6" height="1.3" fill="#3a2259"/><rect x="2.6" y="7" width="1.3" height="6" fill="#3a2259"/><rect x="9.7" y="7" width="1.3" height="6" fill="#3a2259"/></svg>
<div class="t" style="left:120px;top:592px;font-size:15px;letter-spacing:0.5px"><span style="color:#55bdf0">CallbackGo</span><span style="color:#dcdcdc;padding:0 1.5px">&lt;</span><span style="color:#5b98a8">T</span><span style="color:#dcdcdc;padding:0 1.5px">&gt;</span><span style="color:#d6dcc0"> @0200002E</span></div>
<svg style="left:77.4px;top:609px" width="10" height="20" viewBox="0 0 10 20"><path d="M1.8 4 L7.4 9.9 L1.8 15.8Z" fill="none" stroke="#dadada" stroke-width="1.5" stroke-linejoin="miter"/></svg>
<svg style="left:91px;top:609px" width="14" height="16" viewBox="0 0 14 16"><rect x="1" y="4" width="11.6" height="10" rx="2" fill="#b383e0"/><rect x="4" y="5" width="5.6" height="1.3" fill="#3a2259"/><rect x="2.6" y="7" width="1.3" height="6" fill="#3a2259"/><rect x="9.7" y="7" width="1.3" height="6" fill="#3a2259"/></svg>
<div class="t" style="left:120px;top:613px;font-size:15px;letter-spacing:0.5px"><span style="color:#55bdf0">Callback</span><span style="color:#dcdcdc;padding:0 1.5px">&lt;</span><span style="color:#5b98a8">T</span><span style="color:#dcdcdc;padding:0 1.5px">&gt;</span><span style="color:#d6dcc0"> @0200002F</span></div>
<svg style="left:77.4px;top:630px" width="10" height="20" viewBox="0 0 10 20"><path d="M1.8 4 L7.4 9.9 L1.8 15.8Z" fill="none" stroke="#dadada" stroke-width="1.5" stroke-linejoin="miter"/></svg>
<svg style="left:91px;top:630px" width="14" height="16" viewBox="0 0 14 16"><rect x="1" y="4" width="11.6" height="10" rx="2" fill="#b383e0"/><rect x="4" y="5" width="5.6" height="1.3" fill="#3a2259"/><rect x="2.6" y="7" width="1.3" height="6" fill="#3a2259"/><rect x="9.7" y="7" width="1.3" height="6" fill="#3a2259"/></svg>
<div class="t" style="left:120px;top:634px;font-size:15px;letter-spacing:0.5px"><span style="color:#55bdf0">Callback</span><span style="color:#dcdcdc;padding:0 1.5px">&lt;</span><span style="color:#5b98a8">T</span><span style="color:#dcdcdc">, </span><span style="color:#5b98a8">U</span><span style="color:#dcdcdc;padding:0 1.5px">&gt;</span><span style="color:#d6dcc0"> @02000030</span></div>
<svg style="left:77.4px;top:651px" width="10" height="20" viewBox="0 0 10 20"><path d="M1.8 4 L7.4 9.9 L1.8 15.8Z" fill="none" stroke="#dadada" stroke-width="1.5" stroke-linejoin="miter"/></svg>
<svg style="left:91px;top:651px" width="14" height="16" viewBox="0 0 14 16"><rect x="1" y="4" width="11.6" height="10" rx="2" fill="#b383e0"/><rect x="4" y="5" width="5.6" height="1.3" fill="#3a2259"/><rect x="2.6" y="7" width="1.3" height="6" fill="#3a2259"/><rect x="9.7" y="7" width="1.3" height="6" fill="#3a2259"/></svg>
<div class="t" style="left:120px;top:655px;font-size:15px;letter-spacing:0.5px"><span style="color:#55bdf0">Callback</span><span style="color:#dcdcdc;padding:0 1.5px">&lt;</span><span style="color:#5b98a8">T</span><span style="color:#dcdcdc">, </span><span style="color:#5b98a8">U</span><span style="color:#dcdcdc">, </span><span style="color:#5b98a8">V</span><span style="color:#dcdcdc;padding:0 1.5px">&gt;</span><span style="color:#d6dcc0"> @02000031</span></div>
<svg style="left:77.4px;top:672px" width="10" height="20" viewBox="0 0 10 20"><path d="M1.8 4 L7.4 9.9 L1.8 15.8Z" fill="none" stroke="#dadada" stroke-width="1.5" stroke-linejoin="miter"/></svg>
<svg style="left:91px;top:672px" width="20" height="20" viewBox="0 0 20 20"><path d="M5.5 7 H15 M10.8 7 V16 H15" fill="none" stroke="#efc687" stroke-width="1.3"/><path d="M1 7 L5.5 2.5 L10 7 L5.5 11.5Z" fill="#efc687"/><path d="M11.5 9 L15 5.5 L18.5 9 L15 12.5Z" fill="#efc687"/><path d="M11.5 16 L15 12.5 L18.5 16 L15 19.5Z" fill="#efc687"/></svg>
<div class="t" style="left:120px;top:676px;font-size:15px;letter-spacing:0.5px"><span style="color:#54c5a6">CameraFollower</span><span style="color:#d6dcc0"> @02000037</span></div>
<svg style="left:77.4px;top:693px" width="10" height="20" viewBox="0 0 10 20"><path d="M1.8 4 L7.4 9.9 L1.8 15.8Z" fill="none" stroke="#dadada" stroke-width="1.5" stroke-linejoin="miter"/></svg>
<svg style="left:91px;top:693px" width="20" height="20" viewBox="0 0 20 20"><path d="M5.5 7 H15 M10.8 7 V16 H15" fill="none" stroke="#efc687" stroke-width="1.3"/><path d="M1 7 L5.5 2.5 L10 7 L5.5 11.5Z" fill="#efc687"/><path d="M11.5 9 L15 5.5 L18.5 9 L15 12.5Z" fill="#efc687"/><path d="M11.5 16 L15 12.5 L18.5 16 L15 19.5Z" fill="#efc687"/></svg>
<div class="t" style="left:120px;top:697px;font-size:15px;letter-spacing:0.5px"><span style="color:#54c5a6">CameraLookAt</span><span style="color:#d6dcc0"> @02000038</span></div>
<svg style="left:77.4px;top:714px" width="10" height="20" viewBox="0 0 10 20"><path d="M1.8 4 L7.4 9.9 L1.8 15.8Z" fill="none" stroke="#dadada" stroke-width="1.5" stroke-linejoin="miter"/></svg>
<svg style="left:91px;top:714px" width="20" height="20" viewBox="0 0 20 20"><path d="M5.5 7 H15 M10.8 7 V16 H15" fill="none" stroke="#efc687" stroke-width="1.3"/><path d="M1 7 L5.5 2.5 L10 7 L5.5 11.5Z" fill="#efc687"/><path d="M11.5 9 L15 5.5 L18.5 9 L15 12.5Z" fill="#efc687"/><path d="M11.5 16 L15 12.5 L18.5 16 L15 19.5Z" fill="#efc687"/></svg>
<div class="t" style="left:120px;top:718px;font-size:15px;letter-spacing:0.5px"><span style="color:#54c5a6">ClickToMove</span><span style="color:#d6dcc0"> @02000012</span></div>
<svg style="left:77.4px;top:735px" width="10" height="20" viewBox="0 0 10 20"><path d="M1.8 4 L7.4 9.9 L1.8 15.8Z" fill="none" stroke="#dadada" stroke-width="1.5" stroke-linejoin="miter"/></svg>
<svg style="left:91px;top:735px" width="20" height="20" viewBox="0 0 20 20"><path d="M5.5 7 H15 M10.8 7 V16 H15" fill="none" stroke="#efc687" stroke-width="1.3"/><path d="M1 7 L5.5 2.5 L10 7 L5.5 11.5Z" fill="#efc687"/><path d="M11.5 9 L15 5.5 L18.5 9 L15 12.5Z" fill="#efc687"/><path d="M11.5 16 L15 12.5 L18.5 16 L15 19.5Z" fill="#efc687"/></svg>
<div class="t" style="left:120px;top:739px;font-size:15px;letter-spacing:0.5px"><span style="color:#54c5a6">Controller</span><span style="color:#d6dcc0"> @02000036</span></div>
</div>
<div class="a" style="left:299px;top:117px;width:22px;height:757px;background:#3e3e42"></div>
<svg style="left:304px;top:122px" width="12" height="7"><path d="M0 6 L5.5 0.5 L11 6Z" fill="#999"/></svg>
<div class="a" style="left:304px;top:136px;width:11px;height:75px;background:#686868"></div>
<svg style="left:304px;top:861px" width="12" height="7"><path d="M0 0 H11 L5.5 5.5Z" fill="#999"/></svg>
<div class="a" style="left:10px;top:874px;width:311px;height:22px;background:#3e3e42"></div>
<svg style="left:18px;top:879px" width="7" height="12"><path d="M6 0 V11 L0.5 5.5Z" fill="#999"/></svg>
<div class="a" style="left:31px;top:879px;width:61px;height:11px;background:#686868"></div>
<svg style="left:286px;top:879px" width="7" height="12"><path d="M0 0 V11 L5.5 5.5Z" fill="#999"/></svg>
<div class="a" style="left:329px;top:86px;width:184px;height:27px;background:#3f3f46"></div>
<div class="t" style="left:334px;top:93px;font-size:15px;color:#f1f1f1;letter-spacing:0.5px">Assembly-CSharp.dll</div>
<svg style="left:495px;top:95px" width="11" height="11"><path d="M1 1 L10 10 M10 1 L1 10" stroke="#8a8a8e" stroke-width="1.4"/></svg>
<div class="a" style="left:329px;top:113px;width:1065px;height:464px;background:#3f3f46"></div>
<div class="a" style="left:329px;top:117px;width:21px;height:438px;background:#333337"></div>
<div class="a" style="left:350px;top:117px;width:1023px;height:437px;background:#1e1e1e"></div>
<div class="a" style="left:410px;top:118px;width:962px;height:17px;border:2px solid #464646;background:#1e1e1e"></div>
<div class="t" style="left:360px;width:30px;text-align:right;top:118.5px;font-family:'Liberation Mono',monospace;font-size:14px;color:#2b91af">1</div>
<div class="t" style="left:360px;width:30px;text-align:right;top:138.5px;font-family:'Liberation Mono',monospace;font-size:14px;color:#2b91af">2</div>
<div class="t" style="left:360px;width:30px;text-align:right;top:155px;font-family:'Liberation Mono',monospace;font-size:14px;color:#2b91af">3</div>
<div class="t" style="left:360px;width:30px;text-align:right;top:174.5px;font-family:'Liberation Mono',monospace;font-size:14px;color:#2b91af">4</div>
<div class="t" style="left:360px;width:30px;text-align:right;top:194.5px;font-family:'Liberation Mono',monospace;font-size:14px;color:#2b91af">5</div>
<div class="t" style="left:360px;width:30px;text-align:right;top:214.5px;font-family:'Liberation Mono',monospace;font-size:14px;color:#2b91af">6</div>
<div class="t" style="left:360px;width:30px;text-align:right;top:234.5px;font-family:'Liberation Mono',monospace;font-size:14px;color:#2b91af">7</div>
<div class="t" style="left:360px;width:30px;text-align:right;top:251px;font-family:'Liberation Mono',monospace;font-size:14px;color:#2b91af">8</div>
<div class="t" style="left:360px;width:30px;text-align:right;top:272px;font-family:'Liberation Mono',monospace;font-size:14px;color:#2b91af">9</div>
<div class="t" style="left:360px;width:30px;text-align:right;top:287.5px;font-family:'Liberation Mono',monospace;font-size:14px;color:#2b91af">10</div>
<div class="t" style="left:360px;width:30px;text-align:right;top:303.5px;font-family:'Liberation Mono',monospace;font-size:14px;color:#2b91af">11</div>
<div class="t" style="left:411px;top:118.5px;font-family:'Liberation Mono',monospace;font-size:14.5px;letter-spacing:-0.7px;white-space:pre"><span style="color:#57a64a">// D:\<i style="display:inline-block;width:16px;font-style:normal;letter-spacing:0;font-size:15px;font-family:'Liberation Serif',serif">魔</i><i style="display:inline-block;width:16px;font-style:normal;letter-spacing:0;font-size:15px;font-family:'Liberation Serif',serif">龙</i><i style="display:inline-block;width:16px;font-style:normal;letter-spacing:0;font-size:15px;font-family:'Liberation Serif',serif">（</i><i style="display:inline-block;width:16px;font-style:normal;letter-spacing:0;font-size:15px;font-family:'Liberation Serif',serif">售</i><i style="display:inline-block;width:16px;font-style:normal;letter-spacing:0;font-size:15px;font-family:'Liberation Serif',serif">）</i>\Assembly-CSharp.dll</span></div>
<div class="t" style="left:411px;top:138.5px;font-family:'Liberation Mono',monospace;font-size:14.5px;letter-spacing:-0.7px;white-space:pre"><span style="color:#57a64a">// Assembly-CSharp.dll</span></div>
<div class="t" style="left:411px;top:174.5px;font-family:'Liberation Mono',monospace;font-size:14.5px;letter-spacing:-0.7px;white-space:pre"><span style="color:#57a64a">// <i style="display:inline-block;width:16px;font-style:normal;letter-spacing:0;font-size:15px;font-family:'Liberation Serif',serif">全</i><i style="display:inline-block;width:16px;font-style:normal;letter-spacing:0;font-size:15px;font-family:'Liberation Serif',serif">局</i><i style="display:inline-block;width:16px;font-style:normal;letter-spacing:0;font-size:15px;font-family:'Liberation Serif',serif">类</i><i style="display:inline-block;width:16px;font-style:normal;letter-spacing:0;font-size:15px;font-family:'Liberation Serif',serif">型</i><i style="display:inline-block;width:16px;font-style:normal;letter-spacing:0;font-size:15px;font-family:'Liberation Serif',serif">：</i>&lt;Module&gt;</span></div>
<div class="t" style="left:411px;top:194.5px;font-family:'Liberation Mono',monospace;font-size:14.5px;letter-spacing:-0.7px;white-space:pre"><span style="color:#57a64a">// <i style="display:inline-block;width:16px;font-style:normal;letter-spacing:0;font-size:15px;font-family:'Liberation Serif',serif">架</i><i style="display:inline-block;width:16px;font-style:normal;letter-spacing:0;font-size:15px;font-family:'Liberation Serif',serif">构</i><i style="display:inline-block;width:16px;font-style:normal;letter-spacing:0;font-size:15px;font-family:'Liberation Serif',serif">：</i>AnyCPU<i style="display:inline-block;width:16px;font-style:normal;letter-spacing:0;font-size:15px;font-family:'Liberation Serif',serif">（</i>64<i style="display:inline-block;width:16px;font-style:normal;letter-spacing:0;font-size:15px;font-family:'Liberation Serif',serif">位</i><i style="display:inline-block;width:16px;font-style:normal;letter-spacing:0;font-size:15px;font-family:'Liberation Serif',serif">优</i><i style="display:inline-block;width:16px;font-style:normal;letter-spacing:0;font-size:15px;font-family:'Liberation Serif',serif">先</i><i style="display:inline-block;width:16px;font-style:normal;letter-spacing:0;font-size:15px;font-family:'Liberation Serif',serif">）</i></span></div>
<div class="t" style="left:411px;top:214.5px;font-family:'Liberation Mono',monospace;font-size:14.5px;letter-spacing:-0.7px;white-space:pre"><span style="color:#57a64a">// <i style="display:inline-block;width:16px;font-style:normal;letter-spacing:0;font-size:15px;font-family:'Liberation Serif',serif">运</i><i style="display:inline-block;width:16px;font-style:normal;letter-spacing:0;font-size:15px;font-family:'Liberation Serif',serif">行</i><i style="display:inline-block;width:16px;font-style:normal;letter-spacing:0;font-size:15px;font-family:'Liberation Serif',serif">库</i><i style="display:inline-block;width:16px;font-style:normal;letter-spacing:0;font-size:15px;font-family:'Liberation Serif',serif">：</i>.NET Framework 3.5</span></div>
<div class="t" style="left:411px;top:234.5px;font-family:'Liberation Mono',monospace;font-size:14.5px;letter-spacing:-0.7px;white-space:pre"><span style="color:#57a64a">// <i style="display:inline-block;width:16px;font-style:normal;letter-spacing:0;font-size:15px;font-family:'Liberation Serif',serif">时</i><i style="display:inline-block;width:16px;font-style:normal;letter-spacing:0;font-size:15px;font-family:'Liberation Serif',serif">间</i><i style="display:inline-block;width:16px;font-style:normal;letter-spacing:0;font-size:15px;font-family:'Liberation Serif',serif">戳</i><i style="display:inline-block;width:16px;font-style:normal;letter-spacing:0;font-size:15px;font-family:'Liberation Serif',serif">：</i>&lt;<i style="display:inline-block;width:16px;font-style:normal;letter-spacing:0;font-size:15px;font-family:'Liberation Serif',serif">未</i><i style="display:inline-block;width:16px;font-style:normal;letter-spacing:0;font-size:15px;font-family:'Liberation Serif',serif">知</i>&gt; (00000000)</span></div>
<div class="t" style="left:411px;top:273px;font-family:'Liberation Mono',monospace;font-size:14.5px;letter-spacing:-0.7px;white-space:pre"><span style="color:#569cd6">using</span><span style="color:#dcdcdc"> </span><span style="color:#d8d86b">System</span><span style="color:#dcdcdc">;</span></div>
<div class="a" style="left:410px;top:286px;width:963px;height:1px;background:#a0a0a0"></div>
<div class="a" style="left:1373px;top:113px;width:21px;height:441px;background:#3e3e42"></div>
<svg style="left:1378px;top:123px" width="12" height="7"><path d="M0 6 L5.5 0.5 L11 6Z" fill="#999"/></svg>
<div class="a" style="left:1378px;top:136px;width:11px;height:277px;background:#686868"></div>
<svg style="left:1378px;top:541px" width="12" height="7"><path d="M0 0 H11 L5.5 5.5Z" fill="#999"/></svg>
<div class="a" style="left:329px;top:554px;width:1065px;height:23px;background:#3e3e42"></div>
<div class="a" style="left:330px;top:555px;width:74px;height:21px;background:#232324;border:1px solid #48484c"></div>
<div class="a" style="left:388px;top:556px;width:1px;height:19px;background:#48484c"></div>
<svg style="left:392px;top:564px" width="8" height="5"><path d="M0 0 H7 L3.5 4Z" fill="#9a9a9a"/></svg>
<div class="t" style="left:336px;top:559px;font-size:14px;color:#f1f1f1;letter-spacing:0.2px">100 %</div>
<svg style="left:412px;top:560px" width="7" height="11"><path d="M6 0 V10 L0.5 5Z" fill="#555559"/></svg>
<svg style="left:1360px;top:560px" width="7" height="11"><path d="M0 0 V10 L5.5 5Z" fill="#555559"/></svg>
<div class="a" style="left:329px;top:585px;width:1065px;height:312px;background:#2d2d30;border:1px solid #3f3f46"></div>
<div class="a" style="left:330px;top:586px;width:1062px;height:28px;background:#007acc"></div>
<div class="t" style="left:335px;top:592px;font-size:15px;color:#fff">搜索</div>
<div class="a" style="left:378px;top:596px;width:968px;height:7px;background-image:radial-gradient(circle at 1px 1px,#3a9ae6 0.8px,transparent 1.1px),radial-gradient(circle at 3.5px 3.5px,#3a9ae6 0.8px,transparent 1.1px);background-size:5px 5px"></div>
<svg style="left:1354px;top:596px" width="11" height="6"><path d="M0 0 H11 L5.5 5.5Z" fill="#fff"/></svg>
<svg style="left:1373px;top:594px" width="12" height="11"><path d="M1 0.5 L11 10.5 M11 0.5 L1 10.5" stroke="#fff" stroke-width="1.7"/></svg>
<div class="a" style="left:330px;top:615px;width:1063px;height:281px;background:#252526"></div>
<div class="a" style="left:330px;top:615px;width:605px;height:31px;background:#3f3f46;border-bottom:1px solid #007acc;border-left:1px solid #007acc;border-right:1px solid #007acc"></div>
<div class="t" style="left:334px;top:623px;font-size:15px;color:#f1f1f1;letter-spacing:0.3px">192.168.1.5</div>
<svg style="left:942px;top:616px" width="26" height="25"><circle cx="12.5" cy="12.5" r="11" fill="none" stroke="#e0e0e0" stroke-width="1.4"/><path d="M8.3 10.5 L12.5 14.5 L16.7 10.5" fill="none" stroke="#f1f1f1" stroke-width="2.3"/></svg>
<div class="t" style="left:972px;top:621px;font-size:15px;color:#f1f1f1">选项</div>
<div class="t" style="left:1011px;top:622px;font-size:15px;color:#f1f1f1">搜索：</div>
<div class="a" style="left:1065px;top:617px;width:162px;height:26px;background:#1f1f20;border:1px solid #434346"></div>
<div class="a" style="left:1211px;top:618px;width:15px;height:24px;background:#2a2a2c;border-left:1px solid #434346"></div>
<svg style="left:1215px;top:628px" width="8" height="5"><path d="M0 0 H7 L3.5 4Z" fill="#999"/></svg>
<svg style="left:1068px;top:623px" width="14" height="12"><rect x="0.7" y="0.7" width="12" height="10" rx="2" fill="#1f2a36" stroke="#cfcfcf" stroke-width="1.3"/><rect x="4" y="4" width="6" height="1.2" fill="#75b8f0"/><rect x="4" y="6.5" width="6" height="1.2" fill="#75b8f0"/></svg>
<div class="t" style="left:1091px;top:622px;font-size:15px;color:#f1f1f1">数字/字符串</div>
<div class="a" style="left:1227px;top:617px;width:164px;height:26px;background:#1f1f20;border:1px solid #434346"></div>
<div class="a" style="left:1374px;top:618px;width:16px;height:24px;background:#2a2a2c;border-left:1px solid #434346"></div>
<svg style="left:1378px;top:628px" width="8" height="5"><path d="M0 0 H7 L3.5 4Z" fill="#999"/></svg>
<div class="t" style="left:1230px;top:622px;font-size:15px;color:#f1f1f1">所有文件</div>
<svg style="left:0;top:0" width="1482" height="945" viewBox="0 0 1482 945">
<defs><linearGradient id="rg" gradientUnits="userSpaceOnUse" x1="400" y1="687" x2="1142" y2="843"><stop offset="0" stop-color="#f03c3c"/><stop offset="0.6" stop-color="#ea3640"/><stop offset="1" stop-color="#b03040"/></linearGradient></defs>
<path d="M399.5 687.2 L417.5 681.5 L416 685.3 L560 715.6 L800 767.4 L1000 812.3 L1142 842.8 L1000 815 L800 772.8 L560 723.6 L414.5 694 L413 698 Z" fill="url(#rg)"/>
</svg>
<div class="a" style="left:40px;top:915px;width:11px;height:11px;border:1px solid #aaa;background:#f4f4f4"></div>
<div class="t" style="left:60px;top:915px;font-size:13px;color:#666">运行图片本地化</div>
<div class="a" style="left:36px;top:922px;width:960px;height:23px;background:#0a90d4"></div>
<div class="t" style="left:45px;top:931px;font-size:12px;color:#fff;font-weight:bold">亲，加入赞助VIP会员获得特权：1、无限制下载所有资源 2、全站无二次收费 3、新资源优先下载体验 <span style="color:#ffd24a;text-decoration:underline;font-weight:normal">立即开通</span></div>
<svg style="left:971px;top:929px" width="15" height="15"><path d="M1.5 1.5 L13.5 13.5 M13.5 1.5 L1.5 13.5" stroke="#fff" stroke-width="2.6"/></svg>
</body></html>
